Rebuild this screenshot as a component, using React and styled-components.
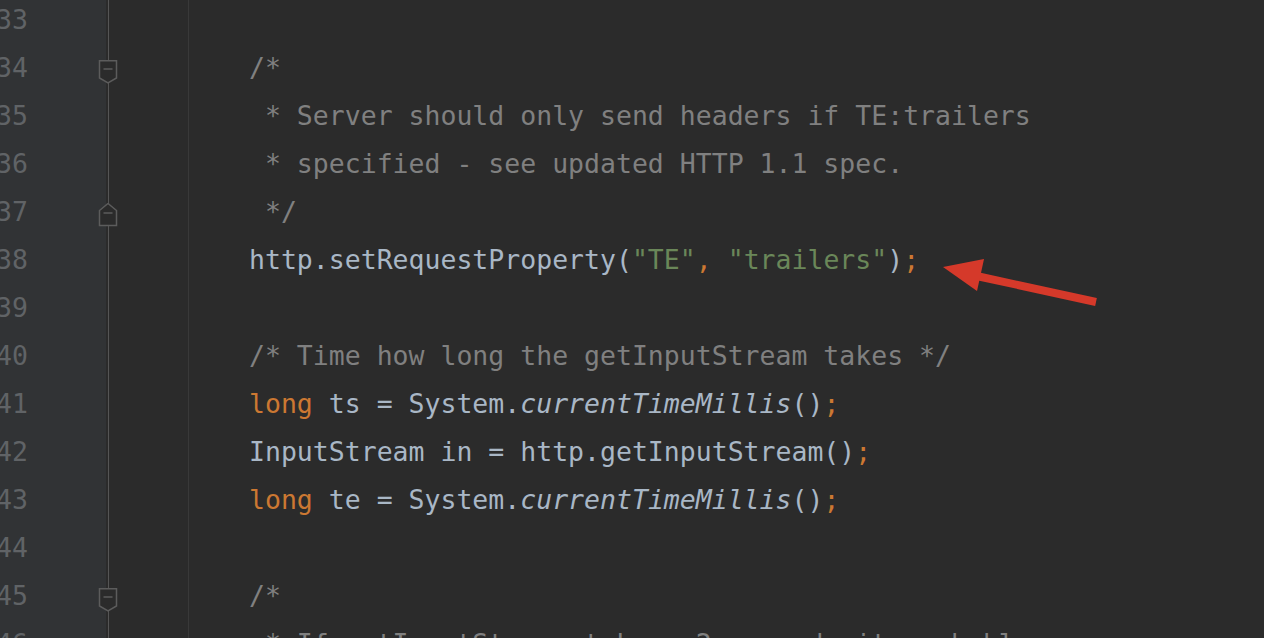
import React from "react";
import styled, { createGlobalStyle } from "styled-components";

const GlobalStyle = createGlobalStyle`
  html, body {
    margin: 0;
    padding: 0;
    background: #2b2b2b;
  }
`;

const Editor = styled.div`
  position: relative;
  width: 1264px;
  height: 638px;
  overflow: hidden;
  background: linear-gradient(
    to right,
    #313335 0 106px,
    #2b2b2b 106px 108px,
    #555555 108px 109px,
    #2b2b2b 109px 188px,
    #393939 188px 189px,
    #2b2b2b 189px
  );
  font-family: "DejaVu Sans Mono", "Liberation Mono", monospace;
  font-size: 26.5px;
`;

const Lines = styled.div`
  margin-top: -4px;
`;

const Row = styled.div`
  display: grid;
  grid-template-columns: 28px 70px 20px 131px 1fr;
  height: 48px;
  line-height: 48px;
  white-space: pre;
`;

const LineNo = styled.div`
  color: #606366;
  display: flex;
  justify-content: flex-end;
  overflow: visible;
`;

const FoldCell = styled.div`
  display: flex;
  justify-content: flex-start;
  align-items: flex-start;
  padding-top: ${(p) => (p.end ? "15px" : "16px")};
`;

const Code = styled.div`
  grid-column: 5;
  color: #a9b7c6;
`;

const Comment = styled.span`
  color: #808080;
`;
const Kw = styled.span`
  color: #cc7832;
`;
const Str = styled.span`
  color: #6a8759;
`;
const Static = styled.span`
  font-style: italic;
`;

const Arrow = styled.svg`
  position: absolute;
  left: 0;
  top: 0;
  pointer-events: none;
`;

const FoldMarker = ({ end }) => (
  <svg width="20" height="24" viewBox="0 0 20 24">
    {end ? (
      <path d="M1.5 22.5 V7.5 L10 0.5 L18.5 7.5 V22.5 Z" fill="#2b2b2b" stroke="#5c5c5c" strokeWidth="1.5" />
    ) : (
      <path d="M1.5 0.75 H18.5 V18 L10 23 L1.5 18 Z" fill="#2b2b2b" stroke="#5c5c5c" strokeWidth="1.5" />
    )}
    <line x1="5.5" x2="14.5" y1={end ? 10 : 9} y2={end ? 10 : 9} stroke="#5c5c5c" strokeWidth="1.5" />
  </svg>
);

const lines = [
  { n: 33, code: null },
  { n: 34, fold: "start", code: <Comment>/*</Comment> },
  { n: 35, code: <Comment> * Server should only send headers if TE:trailers</Comment> },
  { n: 36, code: <Comment> * specified - see updated HTTP 1.1 spec.</Comment> },
  { n: 37, fold: "end", code: <Comment> */</Comment> },
  {
    n: 38,
    code: (
      <>
        http.setRequestProperty(<Str>"TE"</Str>
        <Kw>,</Kw> <Str>"trailers"</Str>)<Kw>;</Kw>
      </>
    ),
  },
  { n: 39, code: null },
  { n: 40, code: <Comment>/* Time how long the getInputStream takes */</Comment> },
  {
    n: 41,
    code: (
      <>
        <Kw>long</Kw> ts = System.<Static>currentTimeMillis</Static>()<Kw>;</Kw>
      </>
    ),
  },
  {
    n: 42,
    code: (
      <>
        InputStream in = http.getInputStream()<Kw>;</Kw>
      </>
    ),
  },
  {
    n: 43,
    code: (
      <>
        <Kw>long</Kw> te = System.<Static>currentTimeMillis</Static>()<Kw>;</Kw>
      </>
    ),
  },
  { n: 44, code: null },
  { n: 45, fold: "start", code: <Comment>/*</Comment> },
  { n: 46, code: <Comment> * If getInputStream takes &gt;2 seconds it probably means</Comment> },
];

export default function App() {
  return (
    <>
      <GlobalStyle />
      <Editor>
        <Lines>
          {lines.map((l) => (
            <Row key={l.n}>
              <LineNo>{l.n}</LineNo>
              <div />
              <FoldCell end={l.fold === "end"}>
                {l.fold && <FoldMarker end={l.fold === "end"} />}
              </FoldCell>
              <Code>{l.code}</Code>
            </Row>
          ))}
        </Lines>
        <Arrow width="1264" height="638" viewBox="0 0 1264 638">
          <line x1="972" y1="275" x2="1096" y2="302" stroke="#d5392a" strokeWidth="8" />
          <polygon points="943,267 984,259 977,291" fill="#d5392a" />
        </Arrow>
      </Editor>
    </>
  );
}
